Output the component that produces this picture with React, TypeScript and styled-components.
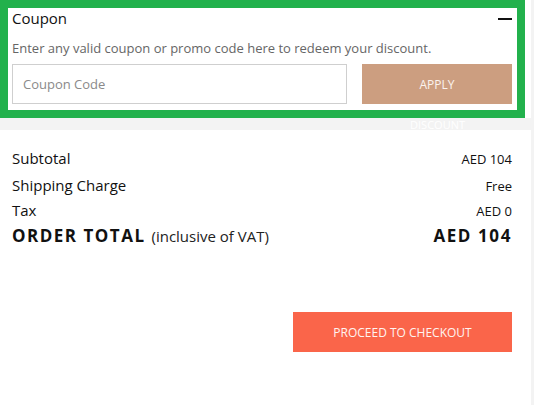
import React from "react";
import styled, { createGlobalStyle } from "styled-components";

const GlobalStyle = createGlobalStyle`
  html, body {
    margin: 0;
    padding: 0;
    background: #f3f3f3;
    font-family: "Open Sans", "Liberation Sans", sans-serif;
  }
  * { box-sizing: border-box; }
`;

const Page = styled.div`
  width: 531px;
  min-height: 100vh;
  display: flex;
  flex-direction: column;
`;

const TopArea = styled.div`
  background: #ffffff;
`;

const CouponPanel = styled.section`
  width: 525px;
  border: 8px solid #22b14c;
  background: #ffffff;
  padding: 0 5px 6px 4px;
`;

const TitleRow = styled.div`
  height: 20px;
  display: flex;
  align-items: center;
  justify-content: space-between;
`;

const Title = styled.h3`
  margin: 0;
  font-size: 15px;
  line-height: 20px;
  font-weight: 400;
  color: #111;
`;

const Minus = styled.span`
  display: block;
  width: 14px;
  height: 2px;
  margin-top: 1px;
  background: #111;
`;

const Description = styled.p`
  margin: 11px 0 0;
  font-size: 13px;
  line-height: 18px;
  color: #666;
`;

const FormRow = styled.div`
  margin-top: 7px;
  display: flex;
  gap: 15px;
`;

const CouponInput = styled.input`
  width: 335px;
  height: 40px;
  border: 1px solid #cfcfcf;
  padding: 0 10px;
  font-family: inherit;
  font-size: 13px;
  color: #333;
  outline: none;
  &::placeholder { color: #8a8a8a; }
`;

const ApplyButton = styled.button`
  width: 150px;
  height: 40px;
  border: none;
  background: #cc9e80;
  color: #fbf3ee;
  font-family: inherit;
  font-size: 12px;
  cursor: pointer;
`;

const Band = styled.div`
  height: 12px;
  display: flex;
  justify-content: flex-end;
  align-items: center;
  padding-right: 66px;
  background: #f3f3f3;
  overflow: hidden;
`;

const BandText = styled.span`
  font-size: 11px;
  line-height: 12px;
  color: #ffffff;
  padding-top: 1px;
`;

const Summary = styled.div`
  flex: 1;
  background: #ffffff;
  padding: 15px 19px 0 12px;
`;

const Row = styled.div<{ $h?: number }>`
  height: ${(p) => p.$h ?? 26}px;
  display: flex;
  justify-content: space-between;
  align-items: baseline;
`;

const Label = styled.span<{ $total?: boolean }>`
  font-size: ${(p) => (p.$total ? "17px" : "15px")};
  line-height: 26px;
  font-weight: ${(p) => (p.$total ? 700 : 400)};
  letter-spacing: ${(p) => (p.$total ? "1.5px" : "0")};
  color: #111;
`;

const Note = styled.span`
  font-size: 15px;
  font-weight: 400;
  letter-spacing: 0;
  color: #222;
`;

const Value = styled.span<{ $total?: boolean }>`
  font-size: ${(p) => (p.$total ? "17px" : "13px")};
  line-height: 26px;
  font-weight: ${(p) => (p.$total ? 700 : 400)};
  letter-spacing: ${(p) => (p.$total ? "1.6px" : "0")};
  color: #111;
`;

const Actions = styled.div`
  margin-top: 63px;
  display: flex;
  justify-content: flex-end;
`;

const CheckoutButton = styled.button`
  width: 219px;
  height: 40px;
  border: none;
  background: #fa654a;
  color: #fff4f1;
  font-family: inherit;
  font-size: 12px;
  cursor: pointer;
`;

export default function App() {
  return (
    <>
      <GlobalStyle />
      <Page>
        <TopArea>
          <CouponPanel>
            <TitleRow>
              <Title>Coupon</Title>
              <Minus />
            </TitleRow>
            <Description>
              Enter any valid coupon or promo code here to redeem your discount.
            </Description>
            <FormRow>
              <CouponInput placeholder="Coupon Code" />
              <ApplyButton>APPLY</ApplyButton>
            </FormRow>
          </CouponPanel>
        </TopArea>
        <Band>
          <BandText>DISCOUNT</BandText>
        </Band>
        <Summary>
          <Row $h={27}>
            <Label>Subtotal</Label>
            <Value>AED 104</Value>
          </Row>
          <Row $h={25}>
            <Label>Shipping Charge</Label>
            <Value>Free</Value>
          </Row>
          <Row>
            <Label>Tax</Label>
            <Value>AED 0</Value>
          </Row>
          <Row>
            <Label $total>
              ORDER TOTAL <Note>(inclusive of VAT)</Note>
            </Label>
            <Value $total>AED 104</Value>
          </Row>
          <Actions>
            <CheckoutButton>PROCEED TO CHECKOUT</CheckoutButton>
          </Actions>
        </Summary>
      </Page>
    </>
  );
}
